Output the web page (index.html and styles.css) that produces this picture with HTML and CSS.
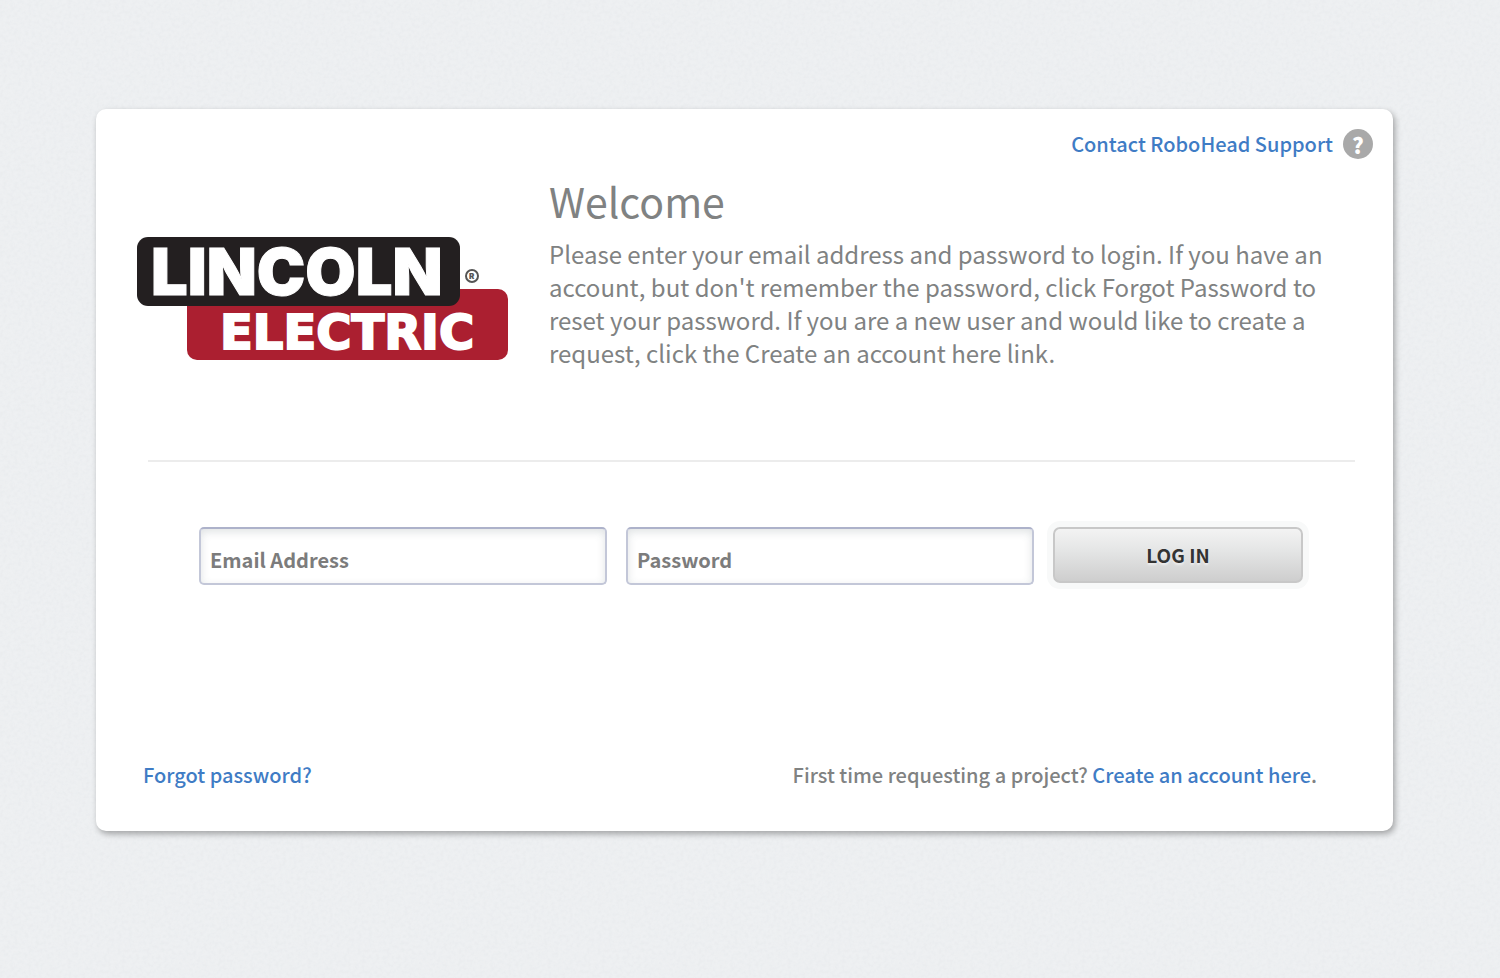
FILE: index.html
```html
<!DOCTYPE html>
<html lang="en">
<head>
  <meta charset="utf-8">
  <title>RoboHead Login</title>
  <link rel="stylesheet" href="styles.css">
</head>
<body>
  <main class="login-box">
    <div class="support">
      <a href="#">Contact RoboHead Support</a>
      <a href="#" class="help" aria-label="Help">?</a>
    </div>

    <div class="intro">
      <svg class="logo" viewBox="0 0 372 124" role="img" aria-label="Lincoln Electric">
        <rect x="50" y="52" width="321" height="71" rx="10" fill="#ab1f30"/>
        <rect x="0" y="0" width="323" height="69" rx="11" fill="#231f20"/>
        <text class="logo-top" x="14" y="58">LINCOLN</text>
        <text class="logo-bottom" x="83" y="112">ELECTRIC</text>
        <circle cx="335" cy="39" r="6" fill="none" stroke="#555" stroke-width="2"/>
        <text class="logo-mark" x="332" y="42">R</text>
      </svg>
      <div class="welcome">
        <h1>Welcome</h1>
        <p>Please enter your email address and password to login. If you have an account, but don't remember the password, click Forgot Password to reset your password. If you are a new user and would like to create a request, click the Create an account here link.</p>
      </div>
    </div>

    <form class="login-form" action="#">
      <input type="email" name="email" placeholder="Email Address" aria-label="Email Address">
      <input type="password" name="password" placeholder="Password" aria-label="Password">
      <button type="submit">LOG IN</button>
    </form>

    <div class="links">
      <a href="#">Forgot password?</a>
      <span>First time requesting a project? <a href="#">Create an account here</a>.</span>
    </div>
  </main>
</body>
</html>
```
FILE: styles.css
```css
* {
  box-sizing: border-box;
}
body {
  margin: 0;
  padding: 109px 107px 40px 96px;
  background-color: #eef0f2;
  background-image: url("data:image/svg+xml,%3Csvg xmlns='http://www.w3.org/2000/svg' width='240' height='240'%3E%3Cfilter id='n' x='0' y='0' width='1' height='1'%3E%3CfeTurbulence type='fractalNoise' baseFrequency='.28' numOctaves='2' stitchTiles='stitch'/%3E%3CfeColorMatrix values='0 0 0 0 .6 0 0 0 0 .63 0 0 0 0 .66 .24 0 0 0 -.08'/%3E%3C/filter%3E%3Crect width='240' height='240' filter='url(%23n)'/%3E%3C/svg%3E");
  font-family: "Noto Sans CJK JP", "Noto Sans", sans-serif;
  font-size: 20px;
  color: #808282;
}
a {
  color: #3f7cc5;
  text-decoration: none;
}
.login-box {
  display: flex;
  flex-direction: column;
  background-color: #fff;
  border-radius: 10px;
  box-shadow: 2px 3px 6px rgba(0, 0, 0, 0.32);
}
.support {
  display: flex;
  justify-content: flex-end;
  align-items: center;
  gap: 10px;
  padding: 20px 20px 0 0;
  font-weight: 500;
  line-height: 30px;
}
.help {
  width: 30px;
  height: 30px;
  border-radius: 50%;
  background-color: #a9a9a9;
  color: #fff;
  font-size: 22px;
  font-weight: 900;
  text-align: center;
}
.intro {
  display: flex;
  gap: 40px;
  min-height: 303px;
  margin: 0 38px 0 52px;
  border-bottom: 2px solid #ececec;
}
.logo {
  flex: none;
  width: 372px;
  height: 124px;
  margin: 78px 0 0 -11px;
  overflow: visible;
}
.logo text {
  font-family: Inter, "Liberation Sans", sans-serif;
  font-weight: 900;
  fill: #fff;
}
.logo .logo-top {
  font-size: 65px;
  stroke: #fff;
  stroke-width: 1px;
}
.logo .logo-bottom {
  font-family: "DejaVu Sans", sans-serif;
  font-size: 48px;
  font-weight: bold;
  stroke: #fff;
  stroke-width: 2px;
}
.logo .logo-mark {
  font-size: 8px;
  fill: #555;
}
.welcome {
  flex: 1;
  padding: 16px 30px 0 0;
}
.welcome h1 {
  margin: 0 0 12px;
  font-size: 41px;
  font-weight: 400;
  line-height: 50px;
}
.welcome p {
  margin: 0;
  font-size: 24px;
  line-height: 33px;
}
.login-form {
  display: grid;
  grid-template-columns: 408fr 408fr 250fr;
  gap: 19px;
  margin: 65px 90px 174px 103px;
}
.login-form input {
  min-width: 0;
  height: 58px;
  padding: 6px 9px 0;
  border: 2px solid #c3c7d8;
  border-top-color: #adb2ca;
  border-radius: 5px;
  background-color: #fff;
  box-shadow: inset 0 3px 9px rgba(60, 80, 90, 0.16);
  font: bold 20px "Noto Sans CJK JP", "Noto Sans", sans-serif;
}
.login-form input::placeholder {
  color: #7c7c7c;
}
.login-form button {
  height: 56px;
  padding: 0 6px 2px;
  border: 2px solid #c8c8c8;
  border-radius: 7px;
  background: linear-gradient(#f3f3f3, #e5e6e6 40%, #cecece);
  box-shadow: 0 0 0 6px #f8f9f9;
  color: #333;
  font: bold 19px "Noto Sans CJK JP", "Noto Sans", sans-serif;
  text-shadow: 0 2px 2px #eee;
  cursor: pointer;
}
.links {
  display: flex;
  justify-content: space-between;
  margin: 0 76px 40px 47px;
  font-weight: 500;
  line-height: 32px;
}
```
